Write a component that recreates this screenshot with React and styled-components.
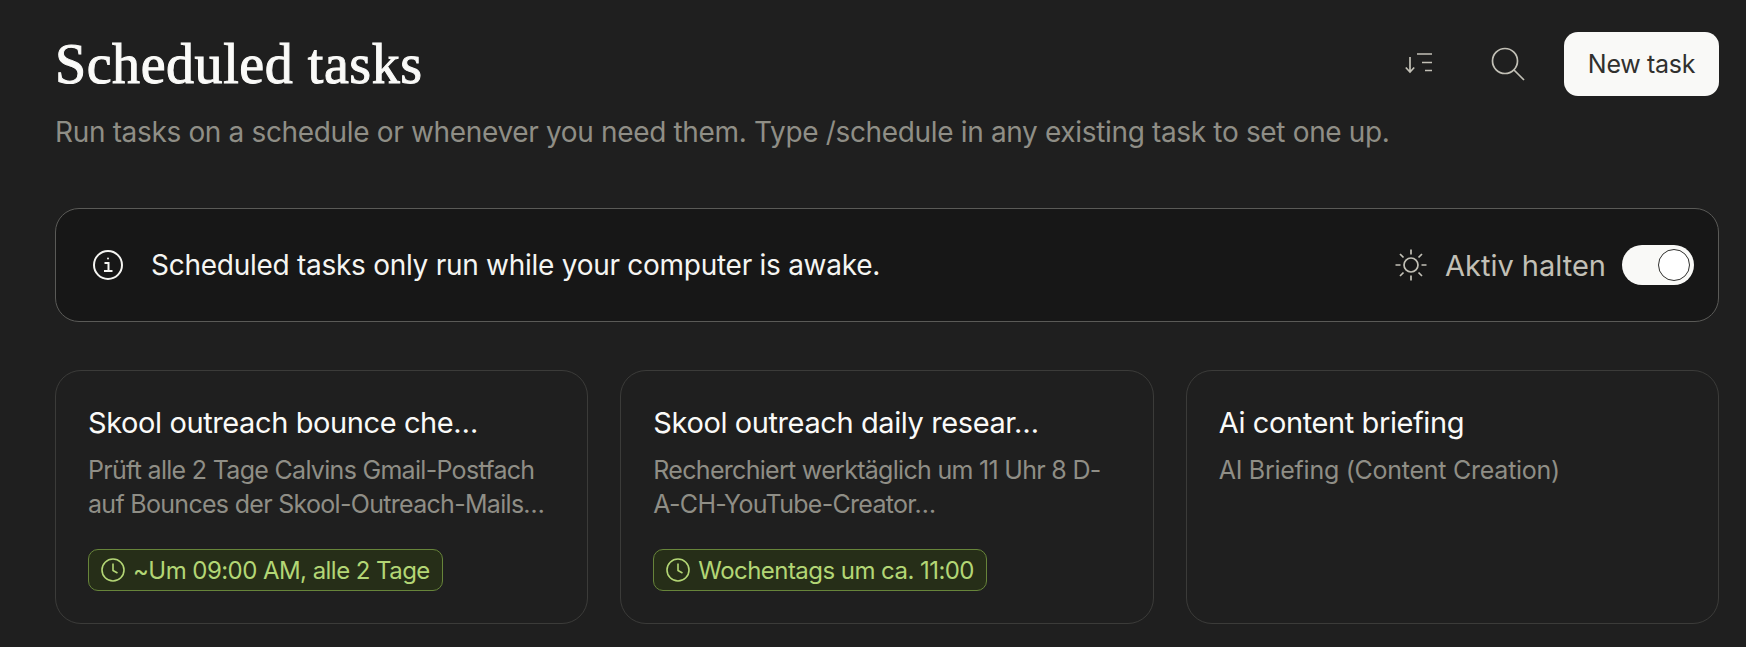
import React from "react";
import styled, { createGlobalStyle } from "styled-components";

const GlobalStyle = createGlobalStyle`
  html, body {
    margin: 0;
    background: #1f1f1f;
  }
  body {
    font-family: Inter, "Noto Sans", sans-serif;
    overflow: hidden;
  }
`;

const Page = styled.div`
  box-sizing: border-box;
  height: 647px;
  padding: 32px 27px 0 55px;
  background: #1f1f1f;
`;

const Header = styled.header`
  display: flex;
  align-items: flex-start;
  justify-content: space-between;
  height: 176px;
`;

const Title = styled.h1`
  margin: 0;
  font-family: "Liberation Serif", serif;
  font-size: 56px;
  font-weight: 400;
  line-height: 64px;
  letter-spacing: 0.55px;
  color: #fafaf8;
  -webkit-text-stroke: 1px #fafaf8;
`;

const Subtitle = styled.p`
  margin: 17px 0 0;
  font-size: 28px;
  line-height: 38px;
  letter-spacing: -0.34px;
  color: #8f8e86;
`;

const Actions = styled.div`
  display: flex;
  align-items: center;
  height: 64px;
`;

const IconButton = styled.button`
  display: flex;
  align-items: center;
  justify-content: center;
  width: 40px;
  height: 40px;
  margin-right: ${(p) => p.$gap}px;
  padding: 0;
  border: 0;
  background: none;
`;

const NewTaskButton = styled.button`
  width: 155px;
  height: 64px;
  border: 0;
  border-radius: 14px;
  background: #f9f9f7;
  color: #30302e;
  font-family: inherit;
  font-size: 25px;
  letter-spacing: -0.3px;
`;

const Banner = styled.section`
  box-sizing: border-box;
  display: flex;
  align-items: center;
  height: 114px;
  padding: 0 24px 0 36px;
  border: 1px solid #5a5a57;
  border-radius: 24px;
  background: #171717;
`;

const BannerText = styled.span`
  flex: 1;
  margin-left: 27px;
  font-size: 28px;
  letter-spacing: -0.27px;
  color: #f5f5f2;
`;

const KeepAwakeLabel = styled.span`
  margin: 0 16px 0 17px;
  font-size: 29px;
  color: #c2c0b6;
`;

const Toggle = styled.div`
  box-sizing: border-box;
  display: flex;
  align-items: center;
  justify-content: flex-end;
  width: 72px;
  height: 40px;
  padding-right: 4px;
  border-radius: 20px;
  background: #f9f9f7;
`;

const ToggleKnob = styled.div`
  box-sizing: border-box;
  width: 32px;
  height: 32px;
  border: 1px solid #30302e;
  border-radius: 50%;
  background: #fff;
`;

const CardGrid = styled.div`
  display: grid;
  grid-template-columns: repeat(3, minmax(0, 1fr));
  gap: 32px;
  margin-top: 48px;
`;

const Card = styled.article`
  box-sizing: border-box;
  display: flex;
  flex-direction: column;
  height: 254px;
  padding: 33px 32px 0;
  border: 1px solid #3b3b39;
  border-radius: 26px;
`;

const CardTitle = styled.h2`
  margin: 0;
  font-size: 29px;
  font-weight: 400;
  line-height: 38px;
  letter-spacing: -0.4px;
  color: #fafaf8;
  white-space: nowrap;
`;

const CardText = styled.div`
  height: 68px;
  margin: 11px 0 0;
  font-size: 25px;
  line-height: 34px;
  letter-spacing: ${(p) => p.$tracking}px;
  color: #8f8e86;
  white-space: nowrap;
`;

const ScheduleBadge = styled.div`
  box-sizing: border-box;
  display: inline-flex;
  align-items: center;
  align-self: flex-start;
  gap: 8px;
  height: 42px;
  margin-top: 28px;
  padding: 0 12px;
  border: 1px solid #67843a;
  border-radius: 10px;
  background: #262e18;
  color: #b3d675;
  font-size: 24px;
  letter-spacing: -0.55px;
  white-space: nowrap;
`;

const SortIcon = () => (
  <svg width="28" height="22" viewBox="0 0 28 22" fill="none" stroke="#c2c0b6" strokeWidth="1.7">
    <path d="M5 4v15M.8 14.500 5 19l4.200-4.500" />
    <path d="M12 1h15M17 9.500h10M20 17.500h7" />
  </svg>
);

const SearchIcon = () => (
  <svg width="36" height="36" viewBox="0 0 36 36" fill="none" stroke="#c2c0b6" strokeWidth="1.7">
    <circle cx="15" cy="15" r="12.500" />
    <path d="M24 24l10 10" />
  </svg>
);

const InfoIcon = () => (
  <svg width="32" height="32" viewBox="0 0 32 32" fill="none" stroke="#f5f5f2" strokeWidth="2">
    <circle cx="16" cy="16" r="14" />
    <path d="M12.500 14h4v8M12 22h8.500" />
    <circle cx="16" cy="9.500" r="1" fill="#f5f5f2" stroke="none" />
  </svg>
);

const SunIcon = () => (
  <svg width="34" height="34" viewBox="0 0 34 34" fill="none" stroke="#c2c0b6" strokeWidth="1.7">
    <circle cx="17" cy="17" r="7" />
    <path d="M17 1.500v5M17 27.500v5M1.500 17h5M27.500 17h5M6 6l3.500 3.500M24.500 24.500 28 28M6 28l3.500-3.500M24.500 9.500 28 6" />
  </svg>
);

const ClockIcon = () => (
  <svg width="24" height="24" viewBox="0 0 24 24" fill="none" stroke="#b3d675" strokeWidth="1.6">
    <circle cx="12" cy="12" r="11" />
    <path d="M12 5.500V12.500l4.500 2.500" />
  </svg>
);

const tasks = [
  {
    title: "Skool outreach bounce che…",
    text: ["Prüft alle 2 Tage Calvins Gmail-Postfach", "auf Bounces der Skool-Outreach-Mails…"],
    tracking: -0.7,
    schedule: "~Um 09:00 AM, alle 2 Tage",
  },
  {
    title: "Skool outreach daily resear…",
    text: ["Recherchiert werktäglich um 11 Uhr 8 D-", "A-CH-YouTube-Creator…"],
    tracking: -0.7,
    schedule: "Wochentags um ca. 11:00",
  },
  {
    title: "Ai content briefing",
    text: ["AI Briefing (Content Creation)"],
    tracking: -0.26,
  },
];

export default function App() {
  return (
    <Page>
      <GlobalStyle />
      <Header>
        <div>
          <Title>Scheduled tasks</Title>
          <Subtitle>
            Run tasks on a schedule or whenever you need them. Type /schedule in any existing task to set one up.
          </Subtitle>
        </div>
        <Actions>
          <IconButton $gap={49}>
            <SortIcon />
          </IconButton>
          <IconButton $gap={36}>
            <SearchIcon />
          </IconButton>
          <NewTaskButton>New task</NewTaskButton>
        </Actions>
      </Header>
      <Banner>
        <InfoIcon />
        <BannerText>Scheduled tasks only run while your computer is awake.</BannerText>
        <SunIcon />
        <KeepAwakeLabel>Aktiv halten</KeepAwakeLabel>
        <Toggle>
          <ToggleKnob />
        </Toggle>
      </Banner>
      <CardGrid>
        {tasks.map((task) => (
          <Card key={task.title}>
            <CardTitle>{task.title}</CardTitle>
            <CardText $tracking={task.tracking}>
              {task.text.map((line) => (
                <div key={line}>{line}</div>
              ))}
            </CardText>
            {task.schedule && (
              <ScheduleBadge>
                <ClockIcon />
                {task.schedule}
              </ScheduleBadge>
            )}
          </Card>
        ))}
      </CardGrid>
    </Page>
  );
}
